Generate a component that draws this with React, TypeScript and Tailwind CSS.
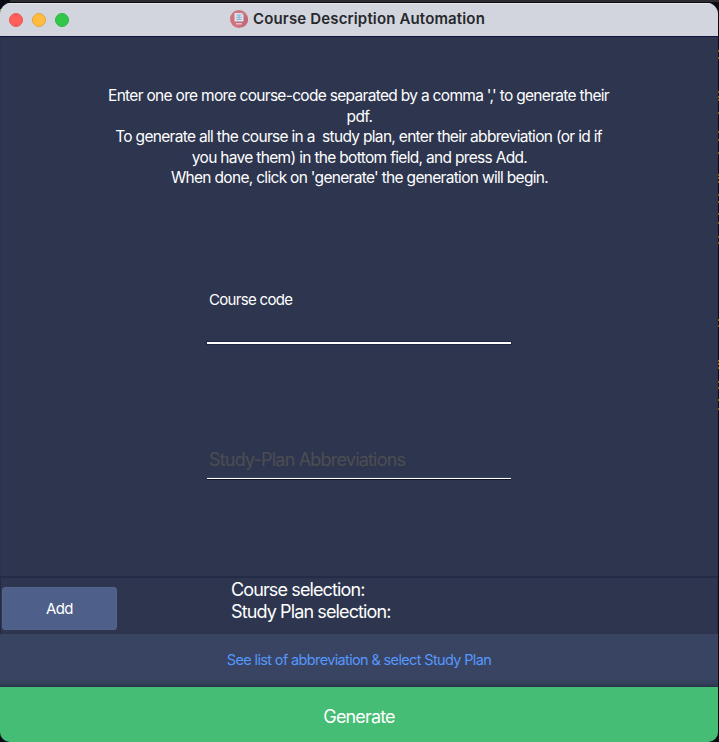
const instructions = [
  { text: "Enter one ore more course-code separated by a comma ',' to generate their", tracking: "tracking-[-0.69px]" },
  { text: "pdf.", tracking: "tracking-[-0.62px] pl-[2px]" },
  { text: "To generate all the course in a  study plan, enter their abbreviation (or id if", tracking: "tracking-[-0.69px]" },
  { text: "you have them) in the bottom field, and press Add.", tracking: "tracking-[-0.68px] pl-[2px]" },
  { text: "When done, click on 'generate' the generation will begin.", tracking: "tracking-[-0.69px] pl-[2px]" },
];

const ticks = ["top-[50px]", "top-[57px]", "top-[91px]", "top-[96px]", "top-[99px]", "top-[112px]", "top-[131px]", "top-[139px]", "top-[152px] h-1", "top-[174px]", "top-[177px]", "top-[181px]", "top-[194px]", "top-[201px]", "top-[213px]", "top-[222px]", "top-[236px]", "top-[242px]", "top-[319px]", "top-[325px]", "top-[360px]", "top-[363px]", "top-[367px]", "top-[381px]", "top-[387px]", "top-[399px]", "top-[408px]"];

function AppIcon() {
  return (
    <svg viewBox="0 0 18 18" className="size-[18px]">
      <circle cx="9" cy="9" r="9" fill="#cf747f" />
      <path d="M13.5 4 18 8.5a9 9 0 0 1-5 8.6L5 12z" fill="#c2697a" />
      <path d="M4.5 3h7.5l1.5 1.5v7h-9z" fill="#dce4ec" />
      <path d="M11.8 3v1.7h1.7z" fill="#9eb5cd" />
      <path d="M6.5 5h4.5M6 7.3h6M9 5v5M6.5 9.5h5" stroke="#86b2d2" strokeWidth="1" />
      <path d="M6.2 13.7h5.8" stroke="#efd7de" strokeWidth="1.5" strokeDasharray="1.6 .4" />
    </svg>
  );
}

export default function App() {
  return (
    <div className="relative h-[742px] w-[719px] overflow-hidden bg-[#090c14] pt-[3px] font-['Inter',sans-serif] text-white">
      <div className="absolute left-[10px] right-0 top-0 h-[2px] bg-[#2d2d2f]" />
      <div className="absolute left-0 top-[9px] h-[3px] w-1 bg-[#58a51b]" />
      {ticks.map((position) => (
        <div key={position} className={`absolute right-0 h-[2px] w-px bg-[#806900] ${position}`} />
      ))}
      <main className="relative flex h-[739px] w-[718px] flex-col overflow-hidden rounded-t-[11px] rounded-b-[10px] bg-[#2e364f]">
        <header className="flex h-[34px] shrink-0 items-center border-b border-t border-b-[#11133b] border-t-[#e4e6ea] bg-[#d2d5dd] pl-[9px]">
          <div className="-mt-px flex gap-[9px]">
            <div className="size-[14px] rounded-full border border-[#e95752] bg-[#ff5f5b]" />
            <div className="size-[14px] rounded-full border border-[#e5a536] bg-[#ffbc40]" />
            <div className="size-[14px] rounded-full border border-[#2db640] bg-[#33c748]" />
          </div>
          <div className="-mt-[2px] ml-[161px] flex items-center gap-[5px]">
            <AppIcon />
            <h1 className="whitespace-nowrap text-[15px] font-semibold leading-[20px] tracking-[0.15px] text-[#26282c]">Course Description Automation</h1>
          </div>
        </header>

        <section className="flex h-[539px] shrink-0 flex-col border-x border-x-[#29324e] pt-[49px]">
          <div className="flex flex-col items-center pr-px">
            {instructions.map(({ text, tracking }) => (
              <p key={text} className={`whitespace-pre text-[15.5px] leading-[20.6px] ${tracking}`}>{text}</p>
            ))}
          </div>
          <div className="ml-[206px] mt-[100px] w-[304px]">
            <label className="block h-[53px] pl-[2px] text-[15px] leading-[22px] tracking-[-0.68px]">Course code</label>
            <div className="h-[2px] bg-white shadow-[0_0_0_1px_#202643]" />
          </div>
          <div className="ml-[206px] mt-[104px] w-[304px]">
            <label className="block h-[30px] pl-[2px] text-[18px] leading-[24px] tracking-[-0.8px] text-[#4c4d52]">Study-Plan Abbreviations</label>
            <div className="h-px bg-white shadow-[0_1px_0_#101424,0_-1px_0_#354466]" />
          </div>
        </section>

        <section className="flex h-[58px] shrink-0 border border-b-0 border-[#242b47] border-t-2 pl-px pt-[9px]">
          <button className="h-[43px] w-[115px] rounded-[3px] border border-[#53638e] bg-[#4e5f89] pt-px text-[15px] tracking-[-0.65px]">Add</button>
          <div className="-mt-[8px] ml-[114px] whitespace-nowrap text-[18px] leading-[22px] tracking-[-0.88px]">
            <p>Course selection:</p>
            <p>Study Plan selection:</p>
          </div>
        </section>
        <button className="h-[53px] shrink-0 bg-[linear-gradient(#394462_0_85%,#343e5a_94%,#28314a)] pb-[2px] text-[14.5px] tracking-[-0.64px] text-[#5598fc]">See list of abbreviation &amp; select Study Plan</button>
        <button className="min-h-0 flex-1 bg-[#45bd74] pt-[4px] text-[18px] tracking-[-0.85px]">Generate</button>
      </main>
    </div>
  );
}
